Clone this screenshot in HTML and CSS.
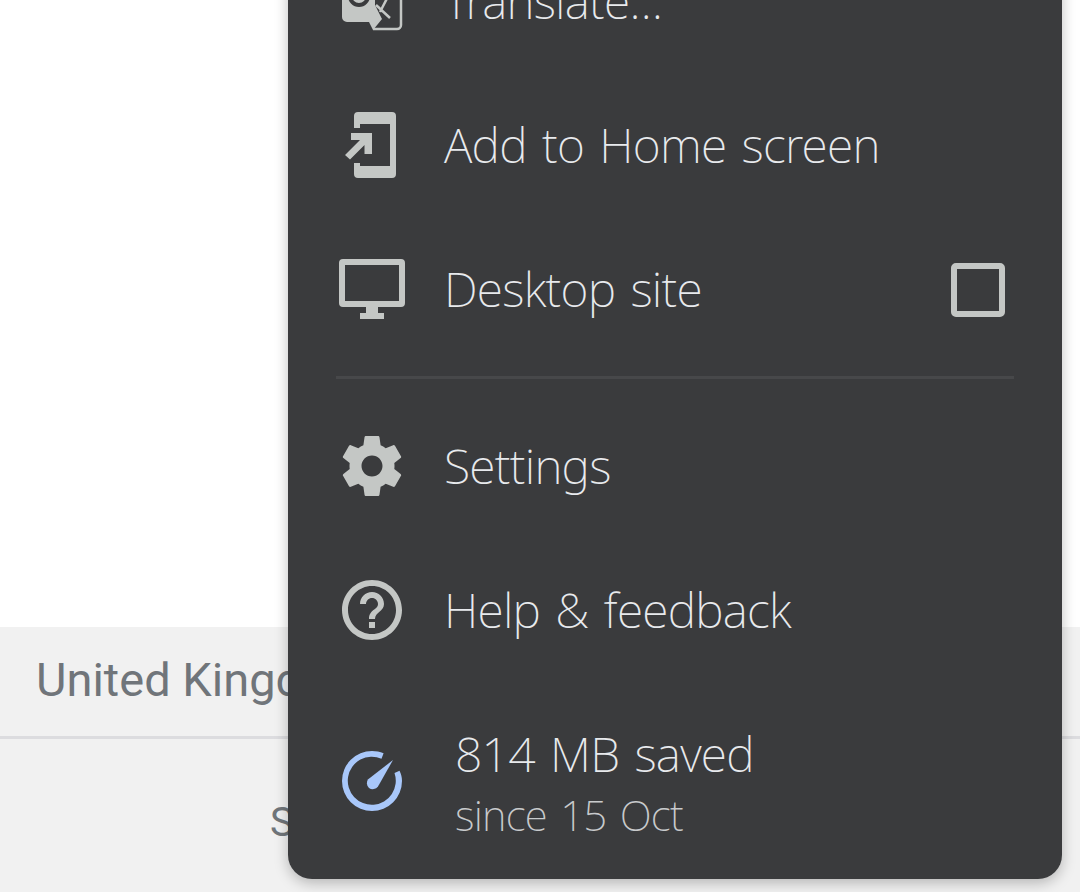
FILE: index.html
```html
<!DOCTYPE html>
<html lang="en">
<head>
<meta charset="utf-8">
<title>Menu</title>
<link rel="stylesheet" href="styles.css">
</head>
<body>
<div class="page">
  <div class="content"></div>
  <div class="region"><span>United Kingdom</span></div>
  <div class="links"><span>Settings</span></div>
  <div class="menu">
    <div class="row">
      <svg class="icon" viewBox="0 0 66 66"><path class="fill" d="M3 -20H36V36L43 50 34 61 30 53H8a5 5 0 0 1-5-5Z"/><path class="outline" d="M34 60H58a4 4 0 0 0 4-4V0"/><circle class="ring" cx="20" cy="27" r="9"/><path class="xmark" d="M37 36 51 49M47.700 30 41 43"/></svg>
      <span class="label">Translate…</span>
    </div>
    <div class="row">
      <svg class="icon" viewBox="0 1 66 66"><path class="fill" d="M15 16V4a4 4 0 0 1 4-4H53a4 4 0 0 1 4 4V62a4 4 0 0 1-4 4H19a4 4 0 0 1-4-4V51H21V54H51V12H21V16Z"/><path class="fill" d="M12 21H33V42H25.500V33L11 47.500 6 43 21 28H12Z"/></svg>
      <span class="label">Add to Home screen</span>
    </div>
    <div class="row">
      <svg class="icon" viewBox="0 -2 66 66"><path class="fill" fill-rule="evenodd" d="M4 0H62a4 4 0 0 1 4 4V44a4 4 0 0 1-4 4H39V54H45V60H21V54H27V48H4a4 4 0 0 1-4-4V4a4 4 0 0 1 4-4ZM6 6V42H60V6Z"/></svg>
      <span class="label">Desktop site</span>
      <span class="check"></span>
    </div>
    <div class="divider"></div>
    <div class="row">
      <svg class="icon icon-lg" viewBox="0 0.330 24 24"><path class="fill" fill-rule="evenodd" d="M19.43 12.98c.04-.32.07-.64.07-.98s-.03-.66-.07-.98l2.11-1.65c.19-.15.24-.42.12-.64l-2-3.46c-.12-.22-.39-.3-.61-.22l-2.49 1c-.52-.4-1.08-.73-1.69-.98l-.38-2.65C14.46 2.18 14.25 2 14 2h-4c-.25 0-.46.18-.49.42l-.38 2.65c-.61.25-1.17.59-1.69.98l-2.49-1c-.23-.09-.49 0-.61.22l-2 3.46c-.13.22-.07.49.12.64l2.11 1.65c-.04.32-.07.65-.07.98s.03.66.07.98l-2.11 1.65c-.19.15-.24.42-.12.64l2 3.46c.12.22.39.3.61.22l2.49-1c.52.4 1.08.73 1.69.98l.38 2.65c.03.24.24.42.49.42h4c.25 0 .46-.18.49-.42l.38-2.65c.61-.25 1.17-.59 1.69-.98l2.49 1c.23.09.49 0 .61-.22l2-3.46c.12-.22.07-.49-.12-.64l-2.11-1.65zM12 15.5c-1.93 0-3.5-1.57-3.5-3.5s1.57-3.5 3.5-3.5 3.5 1.57 3.5 3.5-1.57 3.5-3.5 3.5z"/></svg>
      <span class="label">Settings</span>
    </div>
    <div class="row">
      <svg class="icon icon-lg" viewBox="0 0.330 24 24"><path class="fill" d="M11 18h2v-2h-2v2zm1-16C6.48 2 2 6.48 2 12s4.48 10 10 10 10-4.48 10-10S17.52 2 12 2zm0 18c-4.41 0-8-3.59-8-8s3.59-8 8-8 8 3.59 8 8-3.59 8-8 8zm0-14c-2.21 0-4 1.79-4 4h2c0-1.1.9-2 2-2s2 .9 2 2c0 2-3 1.75-3 5h2c0-2.25 3-2.5 3-5 0-2.21-1.79-4-4-4z"/></svg>
      <span class="label">Help &amp; feedback</span>
    </div>
    <div class="row saved">
      <svg class="icon icon-sm" viewBox="0 0 60 60"><path class="blue" d="M30 0c4 0 8 .8 11.600 2.300L39.500 7.800A24 24 0 1 0 52.500 22l5-2.200C59.200 23 60 26.500 60 30A30 30 0 1 1 30 0Z"/><path class="blue" d="M51 9 36 35.500a6.500 6.500 0 0 1-9 1.500 6.500 6.500 0 0 1-.8-8.700Z"/></svg>
      <div class="saved-text">
        <div class="saved-main">814 MB saved</div>
        <div class="saved-sub">since 15 Oct</div>
      </div>
    </div>
  </div>
</div>
</body>
</html>
```
FILE: styles.css
```css
html, body {
  margin: 0;
  padding: 0;
  height: 100%;
}
.page {
  position: relative;
  width: 1080px;
  height: 892px;
  overflow: hidden;
  background: #f1f1f1;
  display: flex;
  flex-direction: column;
  font-family: Roboto, sans-serif;
}
.content {
  height: 627px;
  background: #fff;
  flex: none;
}
.region {
  height: 105px;
  flex: none;
  border-bottom: 3px solid #dcdcdf;
  display: flex;
  align-items: center;
  padding: 0 0 4px 36px;
  font-size: 47px;
  color: #70757a;
  white-space: nowrap;
}
.links {
  padding: 60px 0 0 270px;
  font-size: 40px;
  color: #70757a;
}
.menu {
  position: absolute;
  left: 288px;
  width: 774px;
  bottom: 13px;
  background: #3a3b3d;
  border-radius: 0 0 24px 24px;
  box-shadow: 0 4px 14px rgba(0, 0, 0, .25);
  font-family: "Noto Sans", sans-serif;
  font-weight: 200;
  color: #e8eaed;
}
.row {
  height: 144px;
  display: flex;
  align-items: center;
  padding: 0 57px 0 51px;
}
.icon {
  width: 66px;
  height: 66px;
  flex: none;
  overflow: visible;
}
.icon-lg {
  width: 72px;
  height: 72px;
  margin: 0 -3px;
}
.icon-sm {
  width: 60px;
  height: 60px;
  margin: 0 3px;
}
.fill { fill: #c4c7c5; }
.outline { fill: none; stroke: #c4c7c5; stroke-width: 2.500; }
.ring { fill: none; stroke: #3a3b3d; stroke-width: 4; }
.xmark { fill: none; stroke: #c4c7c5; stroke-width: 2.500; }
.blue { fill: #a8c7fa; }
.label {
  margin-left: 39px;
  font-size: 48px;
  letter-spacing: -.75px;
  word-spacing: 3.500px;
  line-height: 66px;
  margin-top: -2px;
  flex: 1;
  white-space: nowrap;
}
.check {
  width: 42px;
  height: 42px;
  border: 6px solid #c4c7c5;
  border-radius: 5px;
  flex: none;
  margin-top: -1px;
}
.divider {
  height: 3px;
  margin: 14px 48px 16px 48px;
  background: #47484a;
}
.saved { height: 196px; }
.saved-text { margin-left: 50px; padding-top: 6px; }
.saved-main { font-size: 48px; letter-spacing: -.75px; word-spacing: 3.500px; line-height: 62px; }
.saved-sub { font-size: 42px; letter-spacing: -.75px; word-spacing: 3px; color: #c8cacc; line-height: 60px; }
```
